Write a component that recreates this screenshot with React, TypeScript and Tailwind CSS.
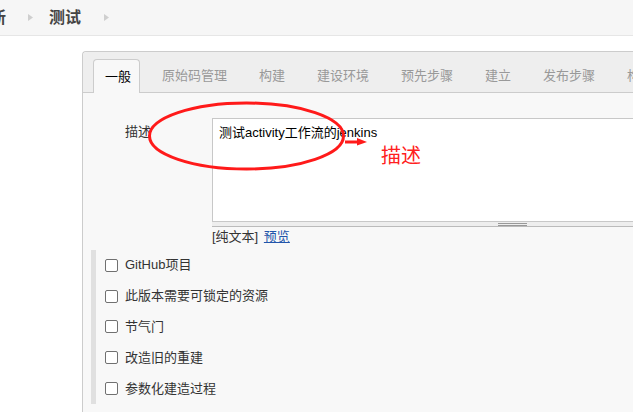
import React from 'react';

const tabs = ['一般', '原始码管理', '构建', '建设环境', '预先步骤', '建立', '发布步骤', '构建后操作'];

const options = ['GitHub项目', '此版本需要可锁定的资源', '节气门', '改造旧的重建', '参数化建造过程'];

const Crumb = () => (
  <svg width="5" height="7" viewBox="0 0 5 7" className="shrink-0">
    <polygon points="0,0 5,3.5 0,7" fill="#cfcfcf" />
  </svg>
);

const App = () => {
  return (
    <div className="relative w-[633px] h-[412px] overflow-hidden bg-white font-['Liberation_Sans','Noto_Sans_CJK_SC',sans-serif] text-[13px] text-[#333]">
      {/* breadcrumb bar */}
      <header className="h-9 bg-[#f6f6f6] border-b border-[#e6e6e6] flex items-center">
        <span className="-ml-[10px] text-[16px] font-bold text-[#444] leading-none">新</span>
        <span className="ml-[22px]">
          <Crumb />
        </span>
        <span className="ml-[16px] text-[16px] font-bold text-[#444] leading-none">测试</span>
        <span className="ml-[23px]">
          <Crumb />
        </span>
      </header>

      <div className="pl-[82px] pt-[15px]">
        <div className="w-[800px] h-[400px] border-l border-t border-[#cccccc] rounded-tl-[4px] bg-[#f8f8f8]">
          {/* tab bar */}
          <div className="h-[41px] bg-[#eeeeee] border-b border-[#cccccc] rounded-tl-[4px] flex items-end gap-2 pl-[10px] whitespace-nowrap">
            {tabs.map((t, i) =>
              i === 0 ? (
                <div
                  key={t}
                  className="h-[34px] -mb-px pl-[11px] pr-[8px] mr-[2px] flex items-center border border-b-0 border-[#cccccc] rounded-t-[4px] bg-[#f8f8f8] text-black">
                  {t}
                </div>
              ) : (
                <div key={t} className="h-[33px] px-3 flex items-center text-[#999]">
                  {t}
                </div>
              )
            )}
          </div>

          {/* description */}
          <div className="pt-[25px] flex">
            <div className="w-[129px] shrink-0 pl-[42px] pt-[6px] leading-4">描述</div>
            <div className="shrink-0">
              <div className="w-[600px] h-[104px] bg-white border border-[#c8c8c8] px-[6px] py-[6px] leading-4 text-black">
                测试activity工作流的jenkins
              </div>
              <div className="relative w-[600px] h-[5px] bg-[#eeeeee] border-b border-[#bbbbbb]">
                <div className="absolute left-[286px] top-[1px] w-[29px] h-[3px] border-y border-[#999]" />
              </div>
              <div className="mt-[2px] leading-4 text-[#333]">
                [纯文本]{' '}
                <span className="ml-[2px] text-[#2255aa] underline">预览</span>
              </div>
            </div>
          </div>

          {/* options */}
          <div className="mt-[5px] ml-[8px] border-l-[5px] border-[#e0e0e0] pl-[9px]">
            {options.map((o) => (
              <div key={o} className="h-[30.8px] flex items-center gap-[7px]">
                <span className="w-[13px] h-[13px] rounded-[2px] border border-[#707070] bg-white" />
                <span className="leading-4">{o}</span>
              </div>
            ))}
          </div>
        </div>
      </div>

      {/* red annotation */}
      <svg className="absolute left-0 top-0 pointer-events-none" width="633" height="412">
        <ellipse cx="246.5" cy="136" rx="97" ry="33" fill="none" stroke="#ff1a1a" strokeWidth="3" />
        <line x1="345" y1="142" x2="360" y2="142" stroke="#ff1a1a" strokeWidth="3" />
        <polygon points="357,138 367,142 357,145.5" fill="#ff1a1a" />
      </svg>
      <div className="absolute left-[381px] top-[144px] text-[20px] leading-6 text-[#ff2020]">描述</div>
    </div>
  );
};

export default App;
